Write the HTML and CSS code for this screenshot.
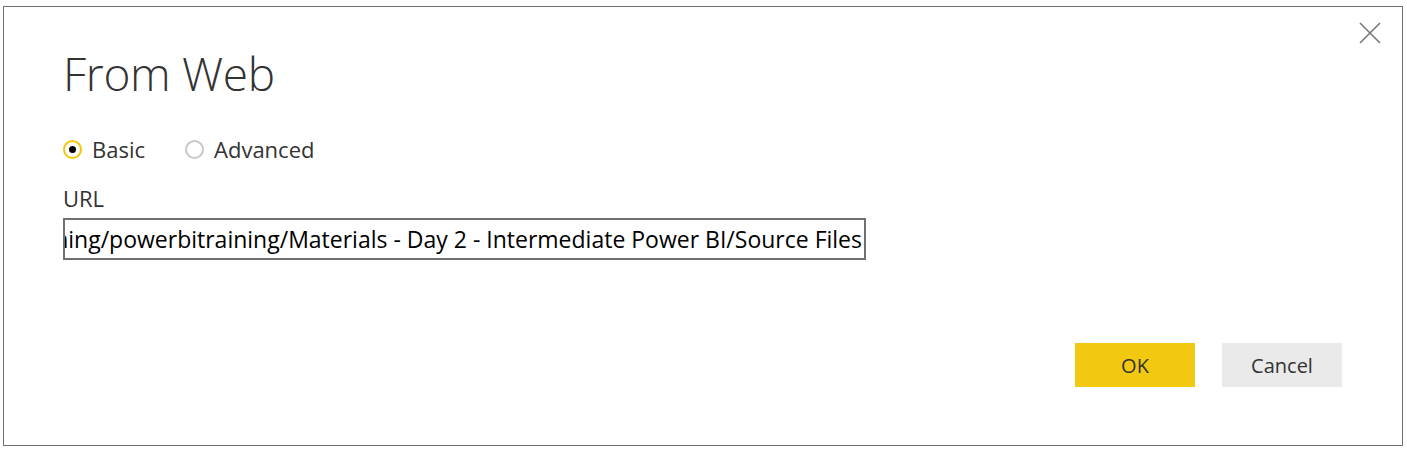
FILE: index.html
```html
<!DOCTYPE html>
<html>
<head>
<meta charset="utf-8">
<link rel="stylesheet" href="styles.css">
</head>
<body>
<div class="dialog">
  <button class="close" aria-label="Close">
    <svg width="22" height="22" viewBox="0 0 22 22"><path d="M1 1 L21 21 M21 1 L1 21" stroke="#787878" stroke-width="1.6" fill="none"/></svg>
  </button>
  <h1 class="title">From Web</h1>
  <div class="radios">
    <label class="radio"><span class="dot checked"></span><span>Basic</span></label>
    <label class="radio"><span class="dot"></span><span>Advanced</span></label>
  </div>
  <div class="field-label">URL</div>
  <div class="input"><span class="input-text">https://sharepoint.com/sites/training/powerbitraining/Materials - Day 2 - Intermediate Power BI/Source Files</span></div>
  <div class="actions">
    <button class="btn primary">OK</button>
    <button class="btn secondary">Cancel</button>
  </div>
</div>
</body>
</html>
```
FILE: styles.css
```css
html, body { margin: 0; padding: 0; background: #fff; }
body { font-family: "Open Sans", "Noto Sans", sans-serif; color: #333; }
.dialog {
  position: relative;
  box-sizing: border-box;
  width: 1400px;
  height: 440px;
  margin: 6px 0 0 3px;
  border: 1px solid #6f6f6f;
  padding: 0 60px 0 59px;
  display: flex;
  flex-direction: column;
}
.close {
  position: absolute;
  top: 15px;
  right: 21px;
  width: 22px;
  height: 22px;
  padding: 0;
  border: 0;
  background: none;
}
.close svg { display: block; }
.title {
  margin: 36px 0 0 0;
  font-weight: 300;
  font-size: 46px;
  line-height: 60px;
  height: 60px;
  color: #333;
  letter-spacing: -0.3px;
}
.radios { display: flex; gap: 40px; margin-top: 31px; height: 30px; align-items: center; }
.radio { display: flex; align-items: center; gap: 10px; font-size: 22px; line-height: 30px; color: #333; }
.dot {
  box-sizing: border-box;
  width: 19px; height: 19px;
  border-radius: 50%;
  border: 2px solid #c8c8c8;
  display: flex; align-items: center; justify-content: center;
}
.dot.checked { border-color: #f2c811; }
.dot.checked::after { content: ""; width: 7px; height: 7px; border-radius: 50%; background: #000; }
.field-label { margin-top: 19px; font-size: 22px; line-height: 30px; height: 30px; }
.input {
  margin-top: 5px;
  box-sizing: border-box;
  width: 803px; height: 42px;
  border: 2px solid #707070;
  display: flex; justify-content: flex-end; align-items: center;
  overflow: hidden;
  padding-right: 2px;
}
.input-text { white-space: nowrap; font-size: 23px; color: #000; flex-shrink: 0; }
.actions { display: flex; justify-content: flex-end; gap: 27px; margin-top: 83px; }
.btn {
  width: 120px; height: 44px;
  border: 0; padding: 0;
  font-family: "Open Sans", "Noto Sans", sans-serif;
  font-size: 20px; color: #333;
}
.primary { background: #f2c811; }
.secondary { background: #eaeaea; }
```
